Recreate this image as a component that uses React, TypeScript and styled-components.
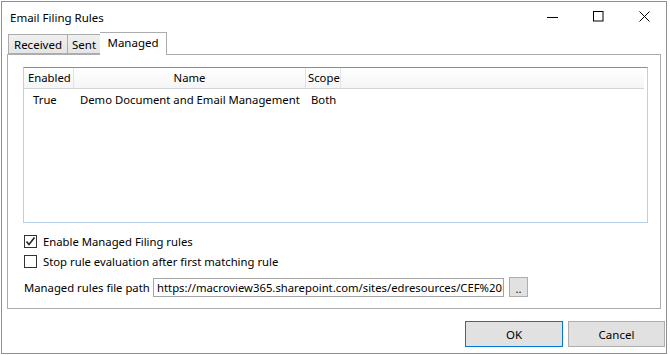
import React from "react";
import styled, { createGlobalStyle } from "styled-components";

const Global = createGlobalStyle`
  html, body { margin: 0; padding: 0; background: #ffffff; }
  body { font-family: "Noto Sans", "Open Sans", sans-serif; font-size: 11.3px; color: #000; }
  * { box-sizing: border-box; }
`;

const FS = "11.3px";

const Window = styled.div`
  margin: 1px 0 0 1px;
  width: 666px;
  height: 353px;
  border: 1px solid #8f8f8f;
  background: #ffffff;
  display: flex;
  flex-direction: column;
  overflow: hidden;
`;

const TitleBar = styled.div`
  height: 30px;
  display: flex;
  align-items: center;
  padding-left: 8px;
  flex-shrink: 0;
`;

const Title = styled.div`
  flex: 1;
  font-size: 11.5px;
`;

const Caption = styled.div`
  display: flex;
  height: 30px;
  margin-right: -2px;
`;

const CapBtn = styled.div`
  width: 46px;
  height: 30px;
  display: flex;
  align-items: center;
  justify-content: center;
`;

const TabStrip = styled.div`
  display: flex;
  align-items: flex-end;
  height: 22px;
  padding-left: 6px;
  position: relative;
  z-index: 1;
  flex-shrink: 0;
`;

const Tab = styled.div<{ $active?: boolean; $w: number }>`
  width: ${(p) => p.$w}px;
  height: ${(p) => (p.$active ? 23 : 20)}px;
  margin-bottom: ${(p) => (p.$active ? -1 : 0)}px;
  border: 1px solid #acacac;
  border-bottom: ${(p) => (p.$active ? "none" : "1px solid #acacac")};
  margin-left: ${(p) => (p.$active ? -1 : 0)}px;
  background: ${(p) => (p.$active ? "#ffffff" : "linear-gradient(#f0f0f0, #e5e5e5)")};
  display: flex;
  align-items: ${(p) => (p.$active ? "flex-start" : "center")};
  padding-top: ${(p) => (p.$active ? 2 : 0)}px;
  justify-content: center;
  font-size: 11.5px;
  & + & { border-left: none; }
`;

const Panel = styled.div`
  margin-left: 5px;
  width: 654px;
  height: 255px;
  border: 1px solid #acacac;
  background: #ffffff;
  padding: 12px 0 0 15px;
  display: flex;
  flex-direction: column;
  flex-shrink: 0;
`;

const ListBox = styled.div`
  width: 625px;
  height: 156px;
  border: 1px solid #b6d1ea;
  border-top-color: #6f93bd;
  display: flex;
  flex-direction: column;
  padding: 0 3px 0 0;
`;

const HeaderRow = styled.div`
  display: flex;
  height: 21px;
  border-bottom: 1px solid #d5d5d5;
  background: linear-gradient(#ffffff, #f4f5f6);
`;

const HeadCell = styled.div<{ $w?: number; $align?: string; $pl?: number }>`
  width: ${(p) => (p.$w ? `${p.$w}px` : "auto")};
  flex: ${(p) => (p.$w ? "none" : "1")};
  border-right: ${(p) => (p.$w ? "1px solid #e2e3e5" : "none")};
  display: flex;
  align-items: center;
  justify-content: ${(p) => p.$align || "flex-start"};
  padding-left: ${(p) => p.$pl ?? 4}px;
  font-size: ${FS};
  padding-bottom: 1px;
  white-space: nowrap;
`;

const DataRow = styled.div`
  display: flex;
  height: 21px;
  align-items: center;
`;

const Cell = styled.div<{ $w: number; $pl: number }>`
  width: ${(p) => p.$w}px;
  padding-left: ${(p) => p.$pl}px;
  font-size: ${FS};
  white-space: nowrap;
`;

const Options = styled.div`
  display: flex;
  flex-direction: column;
  gap: 7px;
  margin-top: 12px;
  padding-left: 1px;
`;

const CheckRow = styled.label`
  display: flex;
  align-items: center;
  gap: 6px;
  height: 13px;
  font-size: ${FS};
  white-space: nowrap;
`;

const Box = styled.span`
  width: 13px;
  height: 13px;
  border: 1px solid #333333;
  background: #ffffff;
  display: flex;
  align-items: center;
  justify-content: center;
`;

const PathRow = styled.div`
  display: flex;
  align-items: center;
  margin-top: 9px;
  padding-left: 1px;
  height: 20px;
`;

const PathLabel = styled.div`
  width: 129px;
  flex: none;
  white-space: nowrap;
  font-size: ${FS};
`;

const PathInput = styled.div`
  width: 351px;
  flex: none;
  height: 19px;
  border: 1px solid #a5a5a5;
  overflow: hidden;
  white-space: nowrap;
  padding: 0 3px;
  display: flex;
  align-items: center;
  font-size: ${FS};
`;

const SmallBtn = styled.div`
  width: 19px;
  height: 20px;
  flex: none;
  margin-left: 5px;
  border: 1px solid #adadad;
  background: #e1e1e1;
  display: flex;
  align-items: flex-end;
  justify-content: center;
  font-size: 11px;
  line-height: 14px;
`;

const Footer = styled.div`
  display: flex;
  justify-content: flex-end;
  gap: 5px;
  padding: 12px 1px 0 0;
`;

const Button = styled.div<{ $default?: boolean }>`
  width: ${(p) => (p.$default ? 98 : 97)}px;
  height: 26px;
  border: 1px solid ${(p) => (p.$default ? "#0078d7" : "#adadad")};
  background: #e1e1e1;
  display: flex;
  align-items: center;
  justify-content: center;
  font-size: 11.5px;
`;

export default function App() {
  return (
    <>
      <Global />
      <Window>
        <TitleBar>
          <Title>Email Filing Rules</Title>
          <Caption>
            <CapBtn>
              <svg width="12" height="12" viewBox="0 0 12 12">
                <line x1="0" y1="6.5" x2="11" y2="6.5" stroke="#000" strokeWidth="1" />
              </svg>
            </CapBtn>
            <CapBtn>
              <svg width="12" height="12" viewBox="0 0 12 12">
                <rect x="0.5" y="0.5" width="9.5" height="9.5" fill="none" stroke="#000" strokeWidth="1" />
              </svg>
            </CapBtn>
            <CapBtn>
              <svg width="12" height="12" viewBox="0 0 12 12">
                <path d="M0.5 0.5 L10.5 10.5 M10.5 0.5 L0.5 10.5" stroke="#000" strokeWidth="1" />
              </svg>
            </CapBtn>
          </Caption>
        </TitleBar>
        <TabStrip>
          <Tab $w={60}>Received</Tab>
          <Tab $w={33}>Sent</Tab>
          <Tab $active $w={67}>Managed</Tab>
        </TabStrip>
        <Panel>
          <ListBox>
            <HeaderRow>
              <HeadCell $w={50} $pl={4}>Enabled</HeadCell>
              <HeadCell $w={232} $align="center" $pl={0}>Name</HeadCell>
              <HeadCell $w={35} $pl={2}>Scope</HeadCell>
              <HeadCell />
            </HeaderRow>
            <DataRow>
              <Cell $w={50} $pl={9}>True</Cell>
              <Cell $w={232} $pl={6}>Demo Document and Email Management</Cell>
              <Cell $w={35} $pl={5}>Both</Cell>
            </DataRow>
          </ListBox>
          <Options>
            <CheckRow>
              <Box>
                <svg width="11" height="11" viewBox="0 0 11 11">
                  <path d="M1.5 5.5 L4 8.5 L9.5 1.5" fill="none" stroke="#222" strokeWidth="1.6" />
                </svg>
              </Box>
              Enable Managed Filing rules
            </CheckRow>
            <CheckRow>
              <Box />
              Stop rule evaluation after first matching rule
            </CheckRow>
          </Options>
          <PathRow>
            <PathLabel>Managed rules file path</PathLabel>
            <PathInput>https://macroview365.sharepoint.com/sites/edresources/CEF%20F</PathInput>
            <SmallBtn>..</SmallBtn>
          </PathRow>
        </Panel>
        <Footer>
          <Button $default>OK</Button>
          <Button>Cancel</Button>
        </Footer>
      </Window>
    </>
  );
}
